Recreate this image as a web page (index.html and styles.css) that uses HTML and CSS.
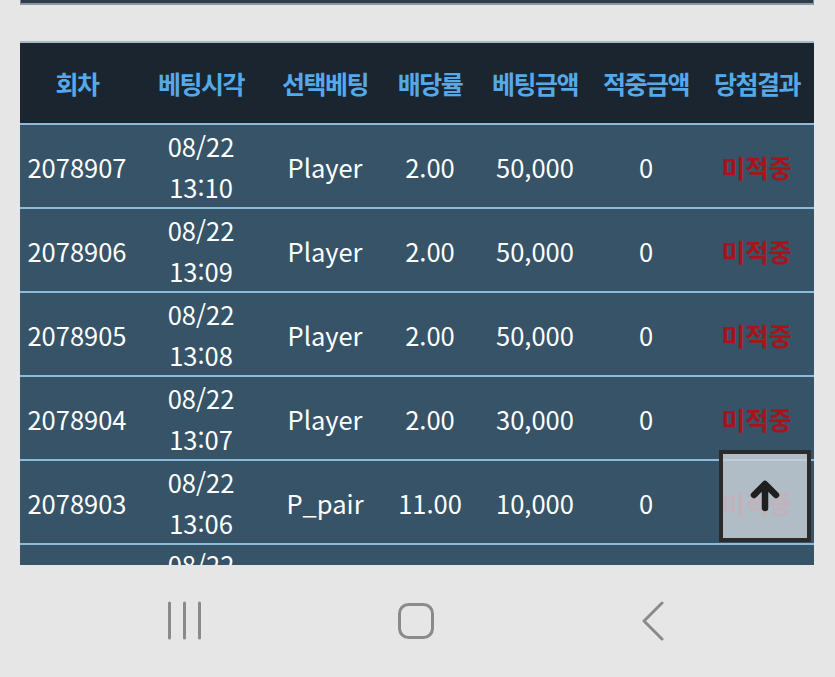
FILE: index.html
```html
<!DOCTYPE html>
<html lang="ko">
<head>
<meta charset="utf-8">
<link rel="stylesheet" href="styles.css">
</head>
<body>
<div class="screen">
  <div class="content">
    <div class="top-panel"></div>
    <table class="bets">
      <colgroup>
        <col class="c1"><col class="c2"><col class="c3"><col class="c4"><col class="c5"><col class="c6"><col class="c7">
      </colgroup>
      <thead>
        <tr><th>회차</th><th>베팅시각</th><th>선택베팅</th><th>배당률</th><th>베팅금액</th><th>적중금액</th><th>당첨결과</th></tr>
      </thead>
      <tbody>
        <tr><td>2078907</td><td>08/22<br>13:10</td><td>Player</td><td>2.00</td><td>50,000</td><td>0</td><td class="lose">미적중</td></tr>
        <tr><td>2078906</td><td>08/22<br>13:09</td><td>Player</td><td>2.00</td><td>50,000</td><td>0</td><td class="lose">미적중</td></tr>
        <tr><td>2078905</td><td>08/22<br>13:08</td><td>Player</td><td>2.00</td><td>50,000</td><td>0</td><td class="lose">미적중</td></tr>
        <tr><td>2078904</td><td>08/22<br>13:07</td><td>Player</td><td>2.00</td><td>30,000</td><td>0</td><td class="lose">미적중</td></tr>
        <tr><td>2078903</td><td>08/22<br>13:06</td><td>P_pair</td><td>11.00</td><td>10,000</td><td>0</td><td class="lose">미적중</td></tr>
        <tr class="partial"><td></td><td>08/22</td><td></td><td></td><td></td><td></td><td></td></tr>
      </tbody>
    </table>
    <button class="to-top" aria-label="맨 위로">
      <svg width="36" height="36" viewBox="0 0 36 36"><path d="M18 30V9M7 17L18 6L29 17" fill="none" stroke="#1f1f1f" stroke-width="6.5" stroke-linecap="round" stroke-linejoin="round"/></svg>
    </button>
  </div>
  <nav class="navbar">
    <svg class="nav-icon" width="40" height="40" viewBox="0 0 40 40"><path d="M7.5 2V37M22.5 2V37M37.5 2V37" stroke="#8a8a8a" stroke-width="3" stroke-linecap="round"/></svg>
    <svg class="nav-icon" width="40" height="40" viewBox="0 0 40 40"><rect x="3.5" y="3.5" width="33" height="33" rx="9" fill="none" stroke="#8a8a8a" stroke-width="3"/></svg>
    <svg class="nav-icon" width="40" height="40" viewBox="0 0 40 40"><path d="M30 2L12 20L30 38" fill="none" stroke="#8a8a8a" stroke-width="3" stroke-linecap="round" stroke-linejoin="round"/></svg>
  </nav>
</div>
</body>
</html>
```
FILE: styles.css
```css
* { box-sizing: border-box; }
html, body {
  margin: 0;
  padding: 0;
  background: #e6e6e6;
  font-family: "Noto Sans CJK KR", "Noto Sans", sans-serif;
}
.screen {
  width: 835px;
  height: 677px;
  display: flex;
  flex-direction: column;
}
.content {
  position: relative;
  height: 565px;
  overflow: hidden;
  padding: 0 21px 0 20px;
}
.top-panel {
  height: 5px;
  background: #2e3d4b;
  border: 1px solid #7d8a96;
  border-top: none;
  border-bottom: 2px solid #8c98a3;
}
.bets {
  margin-top: 36px;
  width: 794px;
  border-collapse: collapse;
  table-layout: fixed;
  border-top: 2px solid #a9b8c5;
}
col.c1 { width: 114px; }
col.c2 { width: 134px; }
col.c3 { width: 114px; }
col.c4 { width: 96px; }
col.c5 { width: 114px; }
col.c6 { width: 108px; }
col.c7 { width: 114px; }
.bets th {
  background: #1a2530;
  color: #56a9e8;
  font-size: 25px;
  font-weight: 700;
  height: 82px;
  padding: 0;
  white-space: nowrap;
  text-align: center;
  letter-spacing: -1.5px;
}
.bets td {
  background: #365368;
  color: #ffffff;
  font-size: 25.5px;
  line-height: 41px;
  height: 84px;
  padding: 0;
  text-align: center;
  white-space: nowrap;
  border-top: 2px solid #8dbcdb;
}
.bets tr.partial td {
  vertical-align: top;
  height: 20px;
  line-height: 38px;
}
.bets td.lose {
  color: #a8141c;
  font-weight: 700;
}
.to-top {
  position: absolute;
  left: 719px;
  top: 450px;
  width: 92px;
  height: 92px;
  border: 4px solid #2b2b2b;
  background: rgba(200, 208, 216, 0.84);
  padding: 0;
  display: flex;
  align-items: center;
  justify-content: center;
}
.navbar {
  height: 112px;
  display: flex;
  align-items: flex-start;
  padding-top: 36px;
}
.nav-icon:nth-child(1) { margin-left: 162px; }
.nav-icon:nth-child(2) { margin-left: 194px; }
.nav-icon:nth-child(3) { margin-left: 196px; }
```
